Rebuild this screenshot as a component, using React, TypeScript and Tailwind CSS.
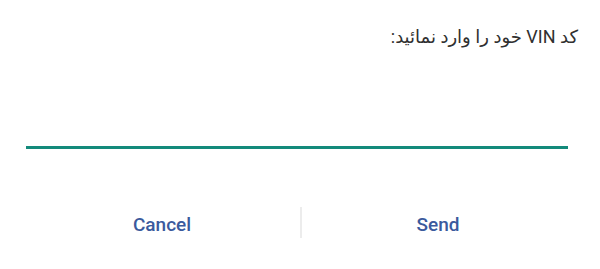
export default function App() {
  return (
    <div className="h-[269px] w-[600px] bg-white" style={{ fontFamily: "Roboto, 'DejaVu Sans', sans-serif" }}>
      <div className="pt-[24px]">
        <p dir="rtl" className="pr-[22px] text-[18px] leading-[26px] text-[#303030]">کد VIN خود را وارد نمائید:</p>
        <div className="ml-[26px] mr-[32px] mt-[96px] h-[3px] bg-[#138a7b]" />
      </div>
      <div className="mt-[58px] flex h-[31px] items-center px-[26px] pt-[5px]">
        <button type="button" className="flex-1 text-[19px] font-medium text-[#3b5a9d]">Cancel</button>
        <div className="-mt-[5px] ml-[2px] h-[31px] w-[2px] bg-[#ececec]" />
        <button type="button" className="flex-1 text-[19px] font-medium text-[#3b5a9d]">Send</button>
      </div>
    </div>
  );
}
